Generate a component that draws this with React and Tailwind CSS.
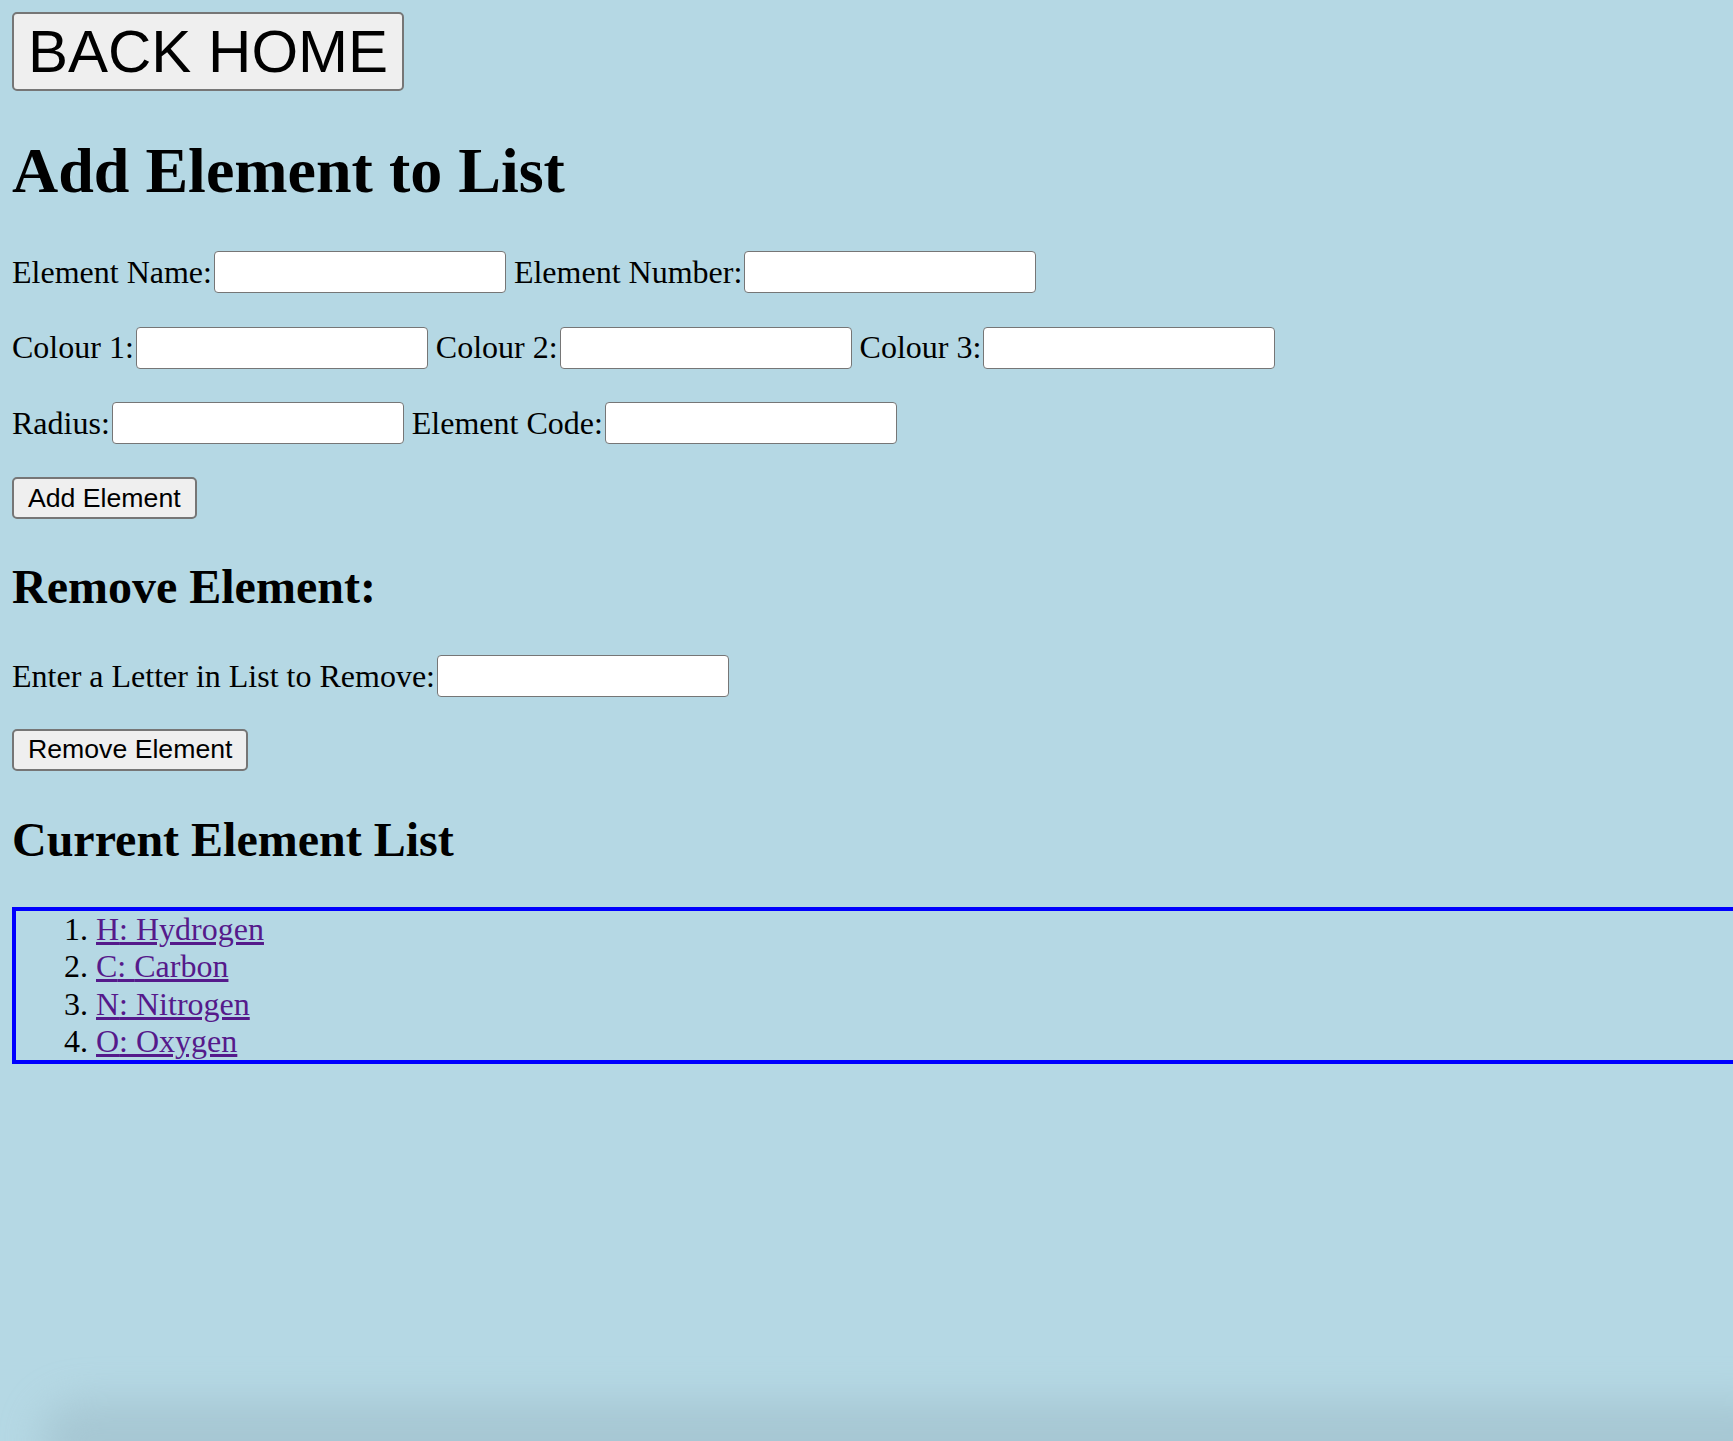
const Field = ({ label, className = "" }) => (
  <>
    <label className={className}>{label}</label>
    <input
      type="text"
      className="ml-[2px] h-[42px] w-[292px] rounded-[4px] border-[1.5px] border-[#767676] bg-white"
    />
  </>
);

const Row = ({ children, className = "" }) => (
  <div className={`flex h-[43.5px] items-center whitespace-nowrap ${className}`}>{children}</div>
);

const elements = [
  { code: "H", name: "Hydrogen" },
  { code: "C", name: "Carbon" },
  { code: "N", name: "Nitrogen" },
  { code: "O", name: "Oxygen" },
];

export default function App() {
  return (
    <div className="relative min-h-screen w-full overflow-hidden bg-[#b5d8e4] p-[12px] font-['Liberation_Serif',serif] text-[32px] leading-[36.8px] text-black">
      <button className="block h-[79px] rounded-[5px] border-2 border-[#767676] bg-[#efefef] px-[14px] font-['Liberation_Sans',Arial,sans-serif] text-[60px] leading-none text-black">
        BACK HOME
      </button>

      <h1 className="mt-[43px] mb-[43px] text-[64px] font-bold leading-[73.6px]">
        Add Element to List
      </h1>

      <Row>
        <Field label="Element Name:" />
        <Field label="Element Number:" className="ml-[8px]" />
      </Row>
      <Row className="mt-[32px]">
        <Field label="Colour 1:" />
        <Field label="Colour 2:" className="ml-[8px]" />
        <Field label="Colour 3:" className="ml-[8px]" />
      </Row>
      <Row className="mt-[32px]">
        <Field label="Radius:" />
        <Field label="Element Code:" className="ml-[8px]" />
      </Row>

      <button className="mt-[32px] block h-[42px] rounded-[5px] border-2 border-[#767676] bg-[#efefef] px-[14px] font-['Liberation_Sans',Arial,sans-serif] text-[26.67px] leading-none text-black">
        Add Element
      </button>

      <h2 className="mt-[40px] mb-[40px] text-[48px] font-bold leading-[55.2px]">
        Remove Element:
      </h2>

      <Row>
        <Field label="Enter a Letter in List to Remove:" />
      </Row>

      <button className="mt-[31px] block h-[42px] rounded-[5px] border-2 border-[#767676] bg-[#efefef] px-[14px] font-['Liberation_Sans',Arial,sans-serif] text-[26.67px] leading-none text-black">
        Remove Element
      </button>

      <h2 className="mt-[41px] mb-[40px] text-[48px] font-bold leading-[55.2px]">
        Current Element List
      </h2>

      <ol className="w-[1800px] list-decimal border-4 border-[#0000ff] pl-[80px] leading-[37.3px]">
        {elements.map((el) => (
          <li key={el.code}>
            <a href="#" className="text-[#551a8b] underline">
              {el.code}: {el.name}
            </a>
          </li>
        ))}
      </ol>

      <div className="pointer-events-none absolute bottom-[-40px] left-[40px] right-[-60px] h-[80px] rounded-[50px] bg-[#9dbcc8] opacity-60 blur-[20px]" />
    </div>
  );
}
